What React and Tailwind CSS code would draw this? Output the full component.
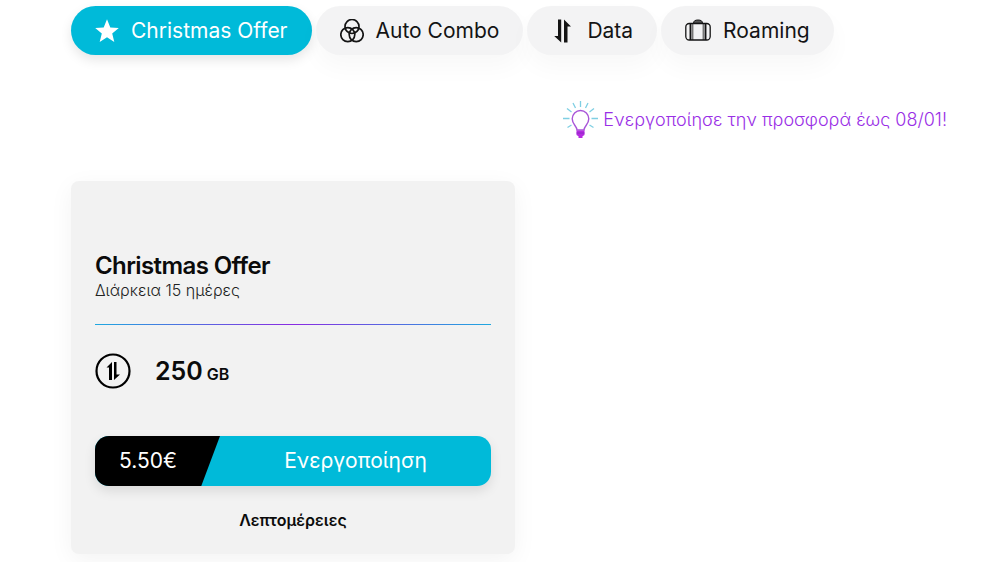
import clsx from 'clsx';

function StarIcon() {
  return (
    <svg viewBox="0 0 24 24" className="size-6 shrink-0" fill="currentColor" aria-hidden="true">
      <path d="M12 .3l3.3 8.1 8.5.5-6.6 5.5 2.1 8.5-7.3-4.7-7.3 4.7 2.1-8.5L.2 8.900l8.500-.5z" />
    </svg>
  );
}

function ComboIcon() {
  return (
    <svg viewBox="0 0 24 24" className="size-6 shrink-0" fill="none" stroke="currentColor" strokeWidth="1.7" aria-hidden="true">
      <circle cx="12" cy="7.500" r="7" />
      <circle cx="7.800" cy="15.600" r="7" />
      <circle cx="16.200" cy="15.600" r="7" />
    </svg>
  );
}

function DataIcon() {
  return (
    <svg viewBox="0 0 24 24" className="size-6 shrink-0" fill="currentColor" aria-hidden="true">
      <path d="M7 .5h3.200v23L3.200 17H7z" />
      <path d="M13 23.500V.5L20 7.500h-3.500v16z" />
    </svg>
  );
}

function SuitcaseIcon() {
  return (
    <svg viewBox="0 0 26 24" className="h-6 w-[26px] shrink-0" fill="none" stroke="currentColor" aria-hidden="true">
      <rect x=".8" y="4.500" width="24.400" height="16.500" rx="3.500" strokeWidth="1.300" />
      <path d="M5.500 4.500V21M20.500 4.500V21" strokeWidth="1.900" />
      <path d="M7.800 4.500V21M18.200 4.500V21" strokeWidth=".8" />
      <path d="M8.500 4.300C8.500 2 10 1 13 1s4.500 1 4.500 3.300z" fill="currentColor" fillOpacity=".7" strokeWidth="1" />
    </svg>
  );
}

function BulbIcon() {
  return (
    <svg viewBox="0 0 36 38" className="h-[38px] w-9 shrink-0" fill="none" aria-hidden="true">
      <g stroke="#7fcfe3" strokeWidth="1.300">
        <path d="M17.500 0v6M10 2l2.500 5M25 2l-2.500 5M4 7.500l4.500 3.500M31 7.500L26.500 11M0 17.500h6.500M28.500 17.500H35M4.500 26.500l4-2.500M30.500 26.500l-4-2.500" />
      </g>
      <path
        d="M14 29c0-4-4.800-5.500-4.800-11.200a8.300 8.300 0 0 1 16.600 0C25.800 23.500 21 25 21 29z"
        stroke="#a855d8"
        strokeWidth="1.400"
      />
      <path d="M13.500 29.500h8v4.500l-2 1.200v1.800h-4v-1.800l-2-1.200z" fill="#b52be0" />
      <path d="M13.500 32h8" stroke="#8a2bc4" />
    </svg>
  );
}

function DataBadge() {
  return (
    <svg viewBox="0 0 36 36" className="size-9 shrink-0" fill="none" aria-hidden="true">
      <circle cx="18" cy="18" r="16.500" stroke="#000" strokeWidth="2.200" />
      <path d="M14 27h3V9l-5.500 5.500H14zM19 9h2.500v12.500H25L19 27z" fill="#000" />
    </svg>
  );
}

const TABS = [
  { label: 'Christmas Offer', icon: StarIcon, active: true },
  { label: 'Auto Combo', icon: ComboIcon },
  { label: 'Data', icon: DataIcon },
  { label: 'Roaming', icon: SuitcaseIcon },
];

function TabButton({ label, icon: Icon, active }) {
  return (
    <button
      type="button"
      aria-pressed={!!active}
      className={clsx(
        'flex h-[49px] items-center gap-3 rounded-full px-6 text-[21px] whitespace-nowrap',
        active
          ? 'bg-[#00bad9] text-white shadow-[0_5px_12px_rgba(0,0,0,0.10)]'
          : 'bg-[#f3f3f4] text-[#141414] shadow-[0_12px_24px_rgba(0,0,0,0.03)]'
      )}
    >
      <Icon />
      {label}
    </button>
  );
}

function OfferCard() {
  return (
    <article className="flex w-full max-w-[444px] flex-col rounded-lg bg-[#f2f2f2] px-6 pt-[71px] pb-5 shadow-[0_6px_24px_rgba(0,0,0,0.05)]">
      <h2 className="text-2xl leading-7 font-semibold tracking-tight text-[#0b0b0b]">Christmas Offer</h2>
      <p className="text-base leading-5 font-light text-[#222]">Διάρκεια 15 ημέρες</p>
      <div className="mt-6 h-px bg-[linear-gradient(90deg,#1fa8e0,#8a2be2_50%,#1fa8e0)]" />
      <div className="mt-7 flex items-center gap-6">
        <DataBadge />
        <p className="text-[25px] leading-9 font-semibold text-[#0b0b0b]">
          250<span className="ml-1 text-base">GB</span>
        </p>
      </div>
      <button
        type="button"
        className="mt-[47px] flex h-[50px] overflow-hidden rounded-[14px] bg-[#00bad9] text-[21px] text-white shadow-[0_5px_12px_rgba(0,0,0,0.10)]"
      >
        <span className="flex h-full w-[125px] items-center bg-black pl-6 [clip-path:polygon(0_0,100%_0,85%_100%,0_100%)]">
          5.50€
        </span>
        <span className="flex h-full flex-1 items-center justify-center">Ενεργοποίηση</span>
      </button>
      <a href="#details" className="mt-5 self-center text-base leading-7 font-semibold text-[#0b0b0b]">
        Λεπτομέρειες
      </a>
    </article>
  );
}

export default function App() {
  return (
    <main className="bg-white pt-1.5 pr-[53px] pb-2 pl-[71px] font-['Inter','Liberation_Sans',sans-serif]">
      <nav className="flex flex-wrap gap-1">
        {TABS.map(tab => <TabButton key={tab.label} {...tab} />)}
      </nav>
      <p className="mt-[46px] flex items-center justify-end gap-1 text-lg leading-6 font-light text-[#9a2fe6]">
        <BulbIcon />
        Ενεργοποίησε την προσφορά έως 08/01!
      </p>
      <section className="mt-[42px]">
        <OfferCard />
      </section>
    </main>
  );
}
